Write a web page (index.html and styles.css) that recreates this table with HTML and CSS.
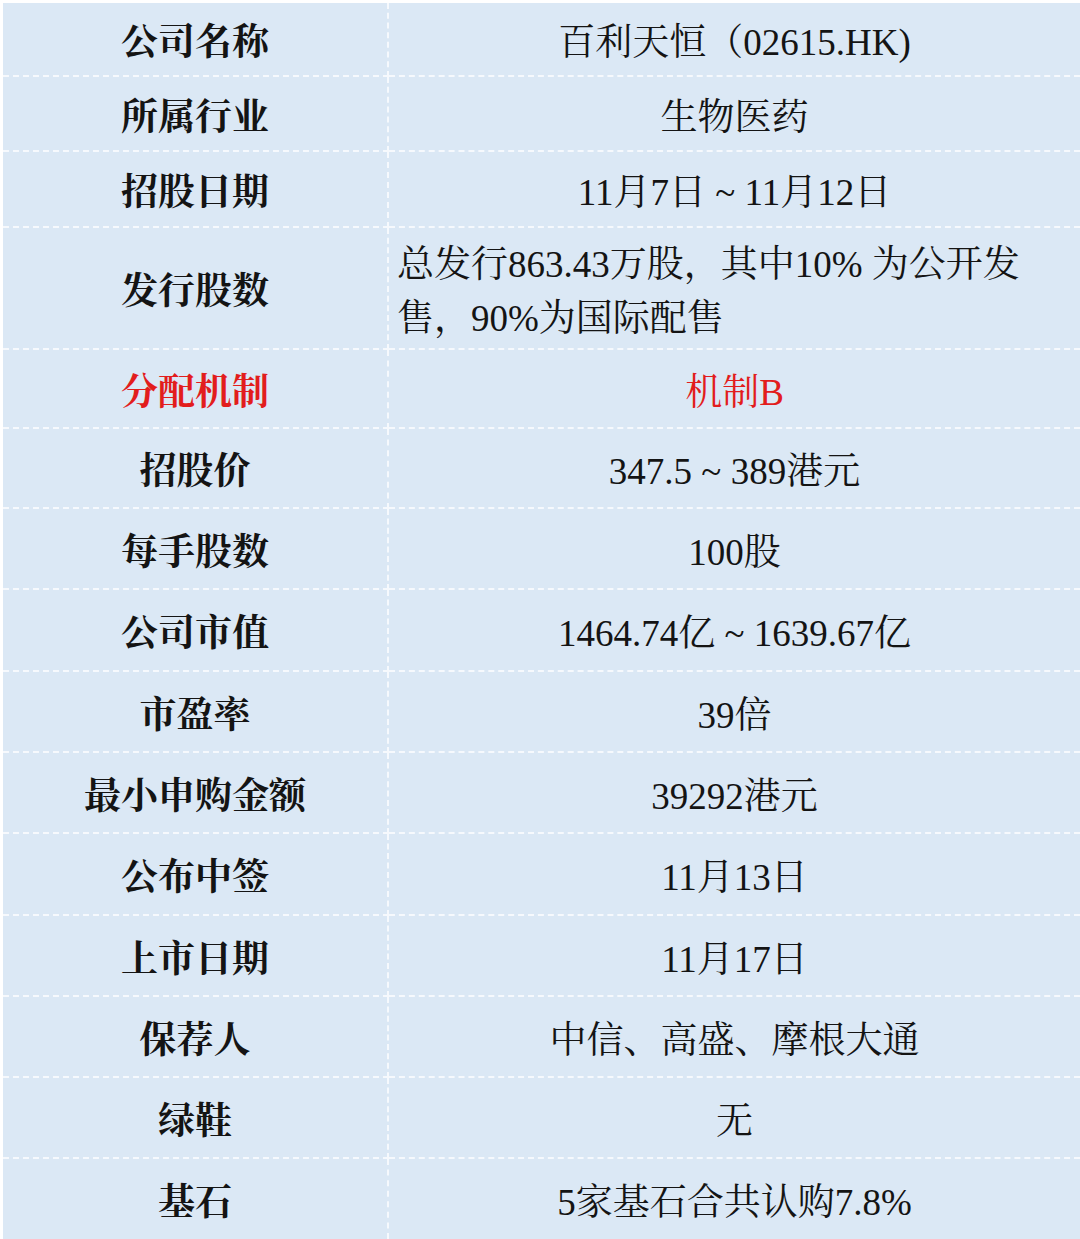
FILE: index.html
```html
<!DOCTYPE html>
<html lang="zh-CN">
<head>
<meta charset="utf-8">
<title>百利天恒 招股信息</title>
<link rel="stylesheet" href="styles.css">
</head>
<body>
<div class="sheet">
  <div class="k">公司名称</div><div class="v">百利天恒（02615.HK)</div>
  <div class="k">所属行业</div><div class="v">生物医药</div>
  <div class="k">招股日期</div><div class="v">11月7日 ~ 11月12日</div>
  <div class="k">发行股数</div><div class="v multi"><span>总发行863.43万股，其中10% 为公开发</span><span>售，90%为国际配售</span></div>
  <div class="k red">分配机制</div><div class="v red">机制B</div>
  <div class="k">招股价</div><div class="v">347.5 ~ 389港元</div>
  <div class="k">每手股数</div><div class="v">100股</div>
  <div class="k">公司市值</div><div class="v">1464.74亿 ~ 1639.67亿</div>
  <div class="k">市盈率</div><div class="v">39倍</div>
  <div class="k">最小申购金额</div><div class="v">39292港元</div>
  <div class="k">公布中签</div><div class="v">11月13日</div>
  <div class="k">上市日期</div><div class="v">11月17日</div>
  <div class="k">保荐人</div><div class="v">中信、高盛、摩根大通</div>
  <div class="k">绿鞋</div><div class="v">无</div>
  <div class="k last">基石</div><div class="v last">5家基石合共认购7.8%</div>
</div>
</body>
</html>
```
FILE: styles.css
```css
html, body {
  margin: 0;
  padding: 0;
  background: #ffffff;
}
.sheet {
  width: 1077px;
  height: 1236px;
  margin: 3px 0 0 3px;
  background: #dbe8f5;
  display: grid;
  grid-template-columns: 386px 1fr;
  grid-template-rows: 74px 75px 76px 122px 79px 80px 81px 82px 81px 81px 82px 81px 81px 81px 80px;
  font-family: "Liberation Serif", "Noto Serif CJK SC", "Noto Sans CJK SC", serif;
  font-size: 37px;
  color: #141414;
}
.k, .v {
  box-sizing: border-box;
  display: flex;
  align-items: center;
  justify-content: center;
  padding-top: 7px;
  border-bottom: 2px dashed #f6f9fd;
  line-height: 1;
}
.k {
  border-right: 2px dashed #f6f9fd;
  font-weight: 700;
}
.v {
  font-weight: 400;
}
.last {
  border-bottom: none;
}
.multi {
  flex-direction: column;
  align-items: flex-start;
  justify-content: center;
  padding-left: 8px;
  gap: 17px;
}
.red {
  color: #e21d1d;
}
```
